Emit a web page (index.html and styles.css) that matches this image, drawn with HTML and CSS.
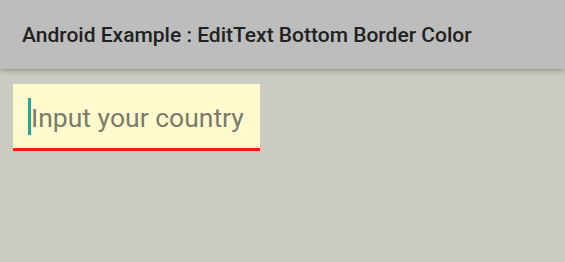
FILE: index.html
```html
<!DOCTYPE html>
<html>
<head>
<meta charset="utf-8">
<link rel="stylesheet" href="styles.css">
</head>
<body>
<div class="app">
  <header class="toolbar">
    <h1 class="title">Android Example : EditText Bottom Border Color</h1>
  </header>
  <main class="content">
    <div class="edit">
      <span class="cursor"></span>
      <span class="hint">Input your country</span>
    </div>
  </main>
</div>
</body>
</html>
```
FILE: styles.css
```css
html, body {
  margin: 0;
  padding: 0;
}
body {
  width: 565px;
  height: 262px;
  overflow: hidden;
  background: #cbcbc3;
  font-family: Roboto, "Liberation Sans", sans-serif;
}
.app {
  display: flex;
  flex-direction: column;
  height: 262px;
}
.toolbar {
  position: relative;
  z-index: 1;
  height: 69px;
  background: #bdbdbd;
  box-shadow: 0 2px 5px rgba(0,0,0,0.25);
  display: flex;
  align-items: center;
  padding-left: 22px;
}
.title {
  margin: 0;
  font-size: 21px;
  font-weight: 500;
  color: #212121;
  letter-spacing: 0;
}
.content {
  padding: 15px 0 0 13px;
}
.edit {
  width: 247px;
  height: 64px;
  background: #fffacd;
  border-bottom: 3px solid #ff1a0a;
  display: flex;
  align-items: center;
  box-sizing: content-box;
}
.cursor {
  width: 3px;
  height: 37px;
  background: #26a69a;
  margin-left: 15px;
  margin-top: 1px;
}
.hint {
  font-size: 26.5px;
  color: #7b7b6a;
  margin-left: 0;
  margin-top: 2px;
}
```
